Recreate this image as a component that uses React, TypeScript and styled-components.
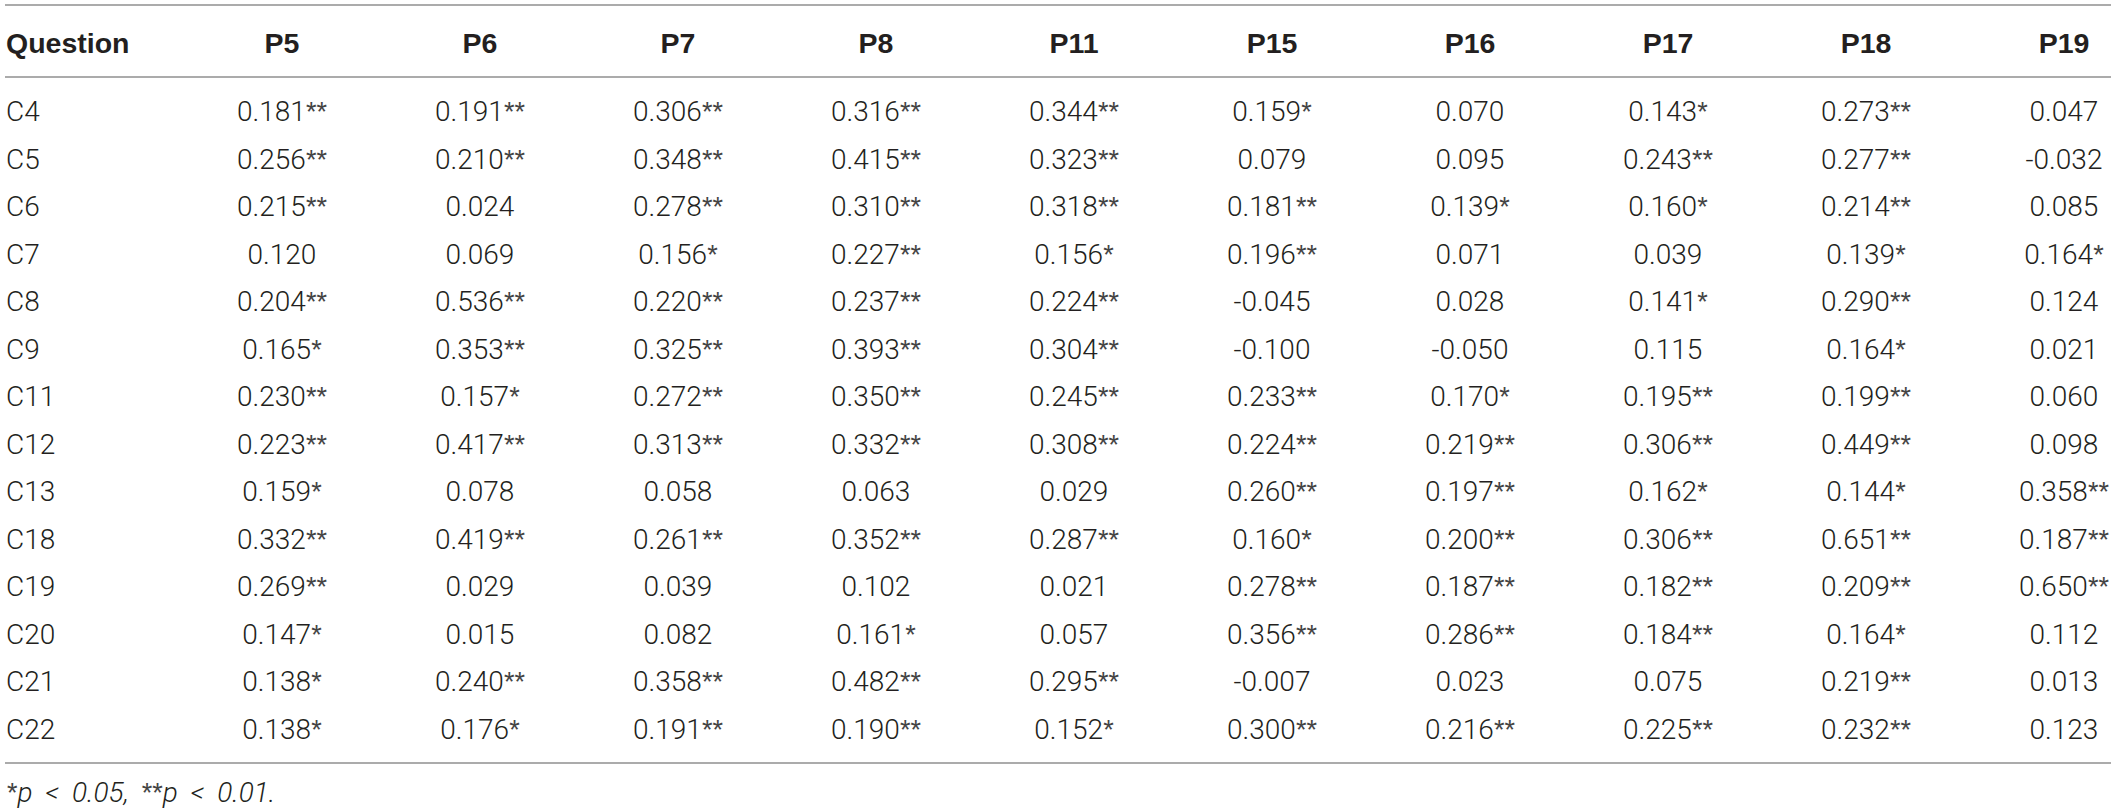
import React from "react";
import styled, { createGlobalStyle } from "styled-components";

const GlobalStyle = createGlobalStyle`
  html, body {
    margin: 0;
    padding: 0;
    background: #ffffff;
  }
`;

const Page = styled.div`
  padding: 4px 6px 0 5px;
  color: #231f20;
`;

const Table = styled.div`
  width: 2106px;
  border-top: 2px solid #ababab;
`;

const columns = "178px repeat(9, 198px) 146px";

const HeaderRow = styled.div`
  display: grid;
  grid-template-columns: ${columns};
  height: 72px;
  padding-top: 4px;
  box-sizing: border-box;
  align-items: center;
  border-bottom: 2px solid #ababab;
  font-family: "Liberation Sans", Arial, sans-serif;
  font-weight: 700;
  font-size: 28.5px;
`;

const Body = styled.div`
  padding: 10px 0 9px;
  border-bottom: 2px solid #ababab;
`;

const Row = styled.div`
  display: grid;
  grid-template-columns: ${columns};
  height: 47.5px;
  align-items: center;
  font-family: Roboto, "Liberation Sans", sans-serif;
  font-weight: 300;
  font-size: 28px;
`;

const Cell = styled.div<{ $first?: boolean; $last?: boolean }>`
  text-align: ${(p) => (p.$first ? "left" : "center")};
  padding-left: ${(p) => (p.$first ? "1px" : p.$last ? "52px" : "0")};
  white-space: nowrap;
`;

// significance marks sit small and high, like Helvetica asterisks
const Stars = styled.span`
  font-family: "Liberation Sans", Arial, sans-serif;
  font-weight: 400;
  font-style: normal;
  font-size: 27px;
  color: #444;
`;

const Footnote = styled.div`
  margin-top: 14px;
  padding-left: 2px;
  font-family: Roboto, "Liberation Sans", sans-serif;
  font-weight: 300;
  font-style: italic;
  font-size: 28px;
  word-spacing: 6px;
  line-height: 30px;
`;

const heads = ["P5", "P6", "P7", "P8", "P11", "P15", "P16", "P17", "P18", "P19"];

const rows: [string, string[]][] = [
  ["C4", ["0.181**", "0.191**", "0.306**", "0.316**", "0.344**", "0.159*", "0.070", "0.143*", "0.273**", "0.047"]],
  ["C5", ["0.256**", "0.210**", "0.348**", "0.415**", "0.323**", "0.079", "0.095", "0.243**", "0.277**", "-0.032"]],
  ["C6", ["0.215**", "0.024", "0.278**", "0.310**", "0.318**", "0.181**", "0.139*", "0.160*", "0.214**", "0.085"]],
  ["C7", ["0.120", "0.069", "0.156*", "0.227**", "0.156*", "0.196**", "0.071", "0.039", "0.139*", "0.164*"]],
  ["C8", ["0.204**", "0.536**", "0.220**", "0.237**", "0.224**", "-0.045", "0.028", "0.141*", "0.290**", "0.124"]],
  ["C9", ["0.165*", "0.353**", "0.325**", "0.393**", "0.304**", "-0.100", "-0.050", "0.115", "0.164*", "0.021"]],
  ["C11", ["0.230**", "0.157*", "0.272**", "0.350**", "0.245**", "0.233**", "0.170*", "0.195**", "0.199**", "0.060"]],
  ["C12", ["0.223**", "0.417**", "0.313**", "0.332**", "0.308**", "0.224**", "0.219**", "0.306**", "0.449**", "0.098"]],
  ["C13", ["0.159*", "0.078", "0.058", "0.063", "0.029", "0.260**", "0.197**", "0.162*", "0.144*", "0.358**"]],
  ["C18", ["0.332**", "0.419**", "0.261**", "0.352**", "0.287**", "0.160*", "0.200**", "0.306**", "0.651**", "0.187**"]],
  ["C19", ["0.269**", "0.029", "0.039", "0.102", "0.021", "0.278**", "0.187**", "0.182**", "0.209**", "0.650**"]],
  ["C20", ["0.147*", "0.015", "0.082", "0.161*", "0.057", "0.356**", "0.286**", "0.184**", "0.164*", "0.112"]],
  ["C21", ["0.138*", "0.240**", "0.358**", "0.482**", "0.295**", "-0.007", "0.023", "0.075", "0.219**", "0.013"]],
  ["C22", ["0.138*", "0.176*", "0.191**", "0.190**", "0.152*", "0.300**", "0.216**", "0.225**", "0.232**", "0.123"]],
];

const Value = ({ v }: { v: string }) => {
  const m = v.match(/^([^*]+)(\**)$/);
  const num = m ? m[1] : v;
  const stars = m ? m[2] : "";
  return (
    <>
      {num}
      {stars && <Stars>{stars}</Stars>}
    </>
  );
};

export default function App() {
  return (
    <Page>
      <GlobalStyle />
      <Table>
        <HeaderRow>
          <Cell $first>Question</Cell>
          {heads.map((h, i) => (
            <Cell key={h} $last={i === heads.length - 1}>
              {h}
            </Cell>
          ))}
        </HeaderRow>
        <Body>
          {rows.map(([q, vals]) => (
            <Row key={q}>
              <Cell $first>{q}</Cell>
              {vals.map((v, i) => (
                <Cell key={i} $last={i === vals.length - 1}>
                  <Value v={v} />
                </Cell>
              ))}
            </Row>
          ))}
        </Body>
      </Table>
      <Footnote>
        <Stars>*</Stars>p &lt; 0.05, <Stars>**</Stars>p &lt; 0.01.
      </Footnote>
    </Page>
  );
}
